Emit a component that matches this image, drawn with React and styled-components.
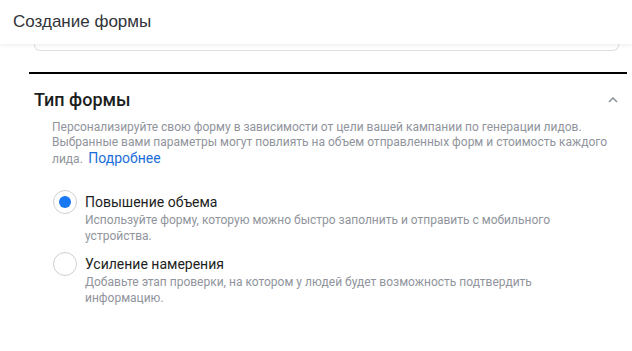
import React from "react";
import styled, { createGlobalStyle } from "styled-components";

const GlobalStyle = createGlobalStyle`
  body {
    margin: 0;
    background: #ffffff;
    font-family: Roboto, "Liberation Sans", Arial, sans-serif;
  }
`;

const Page = styled.div`
  width: 632px;
  height: 351px;
  overflow: hidden;
  background: #fff;
`;

const Header = styled.div`
  position: relative;
  z-index: 2;
  height: 44px;
  display: flex;
  align-items: center;
  padding-left: 13px;
  background: #fff;
  box-shadow: 0 2px 4px rgba(0, 0, 0, 0.06);
  font-family: "Liberation Sans", Arial, sans-serif;
  font-size: 17px;
  color: #303338;
`;

const Body = styled.div`
  padding: 0 5px 0 29px;
`;

const CardStub = styled.div`
  height: 6px;
  margin: 0 8px 0 5px;
  border: 1px solid #dddfe2;
  border-top: none;
  border-radius: 0 0 6px 6px;
`;

const Divider = styled.div`
  height: 2px;
  margin-top: 21px;
  background: #000;
`;

const SectionHead = styled.div`
  display: flex;
  align-items: center;
  justify-content: space-between;
  padding: 15px 9px 0 5px;
`;

const SectionTitle = styled.h2`
  margin: 0;
  font-size: 18px;
  font-weight: 500;
  color: #1c1e21;
`;

const Chevron = styled.svg`
  width: 10px;
  height: 6px;
`;

const Description = styled.p`
  margin: 10px 0 0 23px;
  font-size: 12px;
  line-height: 15px;
  color: #90949c;
  max-width: 560px;
`;

const Link = styled.a`
  color: #1a6ed8;
  font-size: 14px;
  line-height: 17px;
  margin-left: 2px;
  text-decoration: none;
`;

const Options = styled.div`
  display: flex;
  flex-direction: column;
  gap: 8px;
  margin: 23px 0 0 24px;
`;

const Option = styled.label`
  display: flex;
  gap: 8px;
`;

const Radio = styled.span`
  flex: none;
  width: 22px;
  height: 22px;
  border-radius: 50%;
  border: 1px solid #ccd0d5;
  display: flex;
  align-items: center;
  justify-content: center;
  &::after {
    content: "";
    width: 12px;
    height: 12px;
    border-radius: 50%;
    background: ${(p) => (p.checked ? "#1877f2" : "transparent")};
  }
`;

const OptionText = styled.div`
  padding-top: 3px;
`;

const OptionLabel = styled.div`
  font-size: 14px;
  line-height: 18px;
  color: #1c1e21;
`;

const OptionHint = styled.div`
  margin-top: 1px;
  font-size: 12px;
  line-height: 16px;
  color: #90949c;
  max-width: 490px;
`;

const options = [
  {
    label: "Повышение объема",
    hint: "Используйте форму, которую можно быстро заполнить и отправить с мобильного устройства.",
    checked: true,
  },
  {
    label: "Усиление намерения",
    hint: "Добавьте этап проверки, на котором у людей будет возможность подтвердить информацию.",
    checked: false,
  },
];

export default function App() {
  return (
    <Page>
      <GlobalStyle />
      <Header>Создание формы</Header>
      <Body>
        <CardStub />
        <Divider />
        <SectionHead>
          <SectionTitle>Тип формы</SectionTitle>
          <Chevron viewBox="0 0 10 6">
            <path d="M1 5 L5 1 L9 5" fill="none" stroke="#8d949e" strokeWidth="1.6" />
          </Chevron>
        </SectionHead>
        <Description>
          Персонализируйте свою форму в зависимости от цели вашей кампании по генерации лидов.
          Выбранные вами параметры могут повлиять на объем отправленных форм и стоимость каждого
          лида.<Link href="#"> Подробнее</Link>
        </Description>
        <Options>
          {options.map((o) => (
            <Option key={o.label}>
              <Radio checked={o.checked} />
              <OptionText>
                <OptionLabel>{o.label}</OptionLabel>
                <OptionHint>{o.hint}</OptionHint>
              </OptionText>
            </Option>
          ))}
        </Options>
      </Body>
    </Page>
  );
}
